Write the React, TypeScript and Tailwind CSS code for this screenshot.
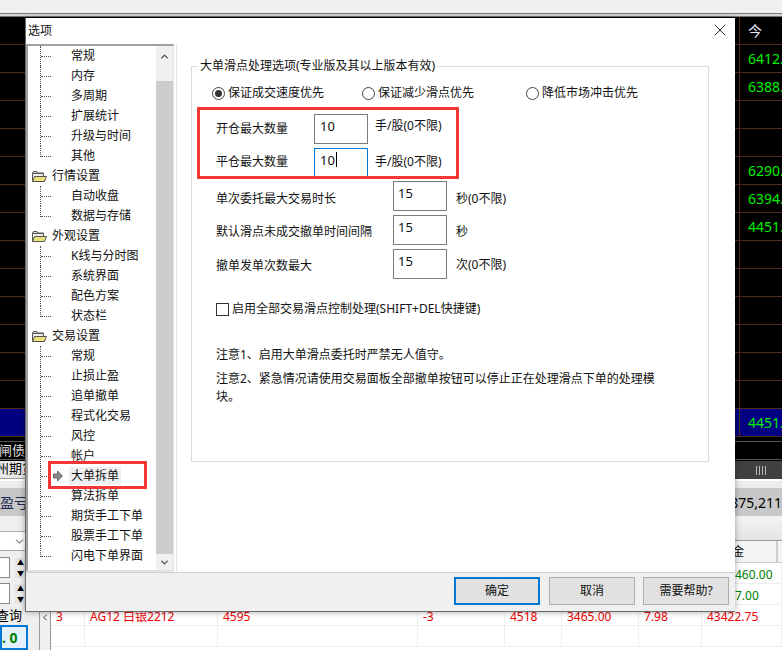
import { ChevronDown, ChevronLeft, X } from "lucide-react";

type TreeItem = { label: string; group?: boolean; last?: boolean; active?: boolean };

const treeItems: TreeItem[] = [
  { label: "常规" },
  { label: "内存" },
  { label: "多周期" },
  { label: "扩展统计" },
  { label: "升级与时间" },
  { label: "其他", last: true },
  { label: "行情设置", group: true },
  { label: "自动收盘" },
  { label: "数据与存储", last: true },
  { label: "外观设置", group: true },
  { label: "K线与分时图" },
  { label: "系统界面" },
  { label: "配色方案" },
  { label: "状态栏", last: true },
  { label: "交易设置", group: true },
  { label: "常规" },
  { label: "止损止盈" },
  { label: "追单撤单" },
  { label: "程式化交易" },
  { label: "风控" },
  { label: "帐户" },
  { label: "大单拆单", active: true },
  { label: "算法拆单" },
  { label: "期货手工下单" },
  { label: "股票手工下单" },
  { label: "闪电下单界面", last: true },
];

const quotes = ["6412.", "6388.", "", "", "6290.", "6394.", "4451.", "", "", "", "", "", "", "4451."];

function FolderIcon() {
  return (
    <svg width="16" height="14" viewBox="0 0 16 14" className="shrink-0">
      <path d="M1.500 4 L2.500 2.500 H6 L7 4 H12.500 V6 H1.500 Z" fill="#d4d4d4" stroke="#555" />
      <path d="M1.500 12.500 V4.500 H12.500 V12.500 Z" fill="#ececec" stroke="#555" />
      <path d="M3.500 7.500 H15.500 L13.500 12.500 H1.500 Z" fill="#ebe27a" stroke="#555" />
    </svg>
  );
}

function TreeRow({ item }: { item: TreeItem }) {
  if (item.group) {
    return (
      <div className="flex h-5 items-center pl-[3px]">
        <FolderIcon />
        <span className="ml-[5px]">{item.label}</span>
      </div>
    );
  }
  return (
    <div className="relative flex h-5 items-center pl-[12px]">
      <div className={`w-0 self-start border-l border-dotted border-[#555] ${item.last ? "h-[11px]" : "h-5"}`} />
      <div className="w-[10px] border-t border-dotted border-[#555]" />
      <div className="w-[20px]">
        {item.active && (
          <svg width="10" height="12" viewBox="0 0 10 12" className="ml-[2px]">
            <path d="M0.500 4 H4.500 V1 L9.500 6 L4.500 11 V8 H0.500 Z" fill="#8a8a8a" stroke="#444" strokeWidth="0.7" />
          </svg>
        )}
      </div>
      <span className={item.active ? "-ml-[2px] bg-[#f0f0f0] px-[2px]" : ""}>{item.label}</span>
      {item.active && (
        <div className="absolute left-[20px] top-0 h-[28px] w-[99px] -translate-y-[5px] border-[3px] border-[#f33535]" />
      )}
    </div>
  );
}

function Radio({ checked, label, className }: { checked?: boolean; label: string; className: string }) {
  return (
    <div className={`flex items-center ${className}`}>
      <span className="flex size-[13px] items-center justify-center rounded-full border border-[#444]">
        {checked && <span className="size-[7px] rounded-full bg-[#333]" />}
      </span>
      <span className="ml-[3px]">{label}</span>
    </div>
  );
}

function NumberField({ label, value, unit, focused, labelClass, unitClass, inputClass, rowClass }: {
  label: string;
  value: string;
  unit: string;
  focused?: boolean;
  labelClass: string;
  unitClass: string;
  inputClass: string;
  rowClass: string;
}) {
  return (
    <div className={`flex ${rowClass}`}>
      <span className={labelClass}>{label}</span>
      <div
        className={`flex items-start pt-[3px] text-[13px] leading-[16px] ${inputClass} border ${focused ? "border-[#0078d7]" : "border-[#7a7a7a]"}`}
      >
        {value}
        {focused && <span className="ml-px h-[15px] w-px bg-black" />}
      </div>
      <span className={unitClass}>{unit}</span>
    </div>
  );
}

function DialogButton({ label, primary }: { label: string; primary?: boolean }) {
  return (
    <button
      className={`h-[28px] w-[86px] bg-[#e1e1e1] ${primary ? "mr-px border-2 border-[#0078d7]" : "border border-[#adadad]"}`}
    >
      {label}
    </button>
  );
}

function OptionsDialog() {
  return (
    <div className="absolute left-[25px] top-[18px] flex h-[594px] w-[710px] flex-col border-b border-l border-[#6a6a6a] bg-white text-[12px] text-[#111] shadow-[0_0_6px_rgba(0,0,0,0.35)]">
      <div className="flex h-[26px] shrink-0 items-center justify-between pl-[2px] pr-[5px]">
        <span className="text-[12px]">选项</span>
        <X size={20} strokeWidth={1} className="-mt-[2px] text-black" />
      </div>
      <div className="flex h-[528px] shrink-0">
        <div className="relative flex h-full w-[148px] shrink-0 border-2 border-r border-[#a0a0a0] border-b-[#e3e3e3] border-r-[#e3e3e3]">
          <div className="w-[128px] shrink-0 overflow-hidden">
            {treeItems.map((item, i) => (
              <TreeRow key={i} item={item} />
            ))}
          </div>
          <div className="flex w-[17px] flex-col bg-[#f0f0f0]">
            <div className="flex h-[35px] items-start justify-center pt-[5px]">
              <ChevronDown size={11} strokeWidth={3} className="rotate-180 text-[#505050]" />
            </div>
            <div className="w-full flex-1 bg-[#cdcdcd]" />
            <div className="flex h-[16px] items-center justify-center">
              <ChevronDown size={11} strokeWidth={3} className="text-[#505050]" />
            </div>
          </div>
        </div>
        <div className="ml-[2px] flex-1 border-l border-[#e3e3e3] pl-[14px] pt-[14px]">
          <fieldset className="h-[404px] w-[518px] border border-[#dcdcdc] pl-[5px]">
            <legend className="ml-[1px] px-[2px] leading-[16px]">大单滑点处理选项(专业版及其以上版本有效)</legend>
            <div className="relative mt-[10px] h-[18px]">
              <Radio checked label="保证成交速度优先" className="absolute left-[15px] top-0" />
              <Radio label="保证减少滑点优先" className="absolute left-[165px] top-0" />
              <Radio label="降低市场冲击优先" className="absolute left-[329px] top-0" />
            </div>
            <div className="mt-[5px] h-[72px] w-[262px] border-[3px] border-[#f33535] pl-[16px] pt-[4px]">
              <NumberField
                label="开仓最大数量"
                value="10"
                unit="手/股(0不限)"
                labelClass="mt-[6px]"
                unitClass="mt-[3px]"
                inputClass="ml-[26px] mr-[7px] h-[30px] w-[54px] pl-[5px]"
                rowClass="h-[34px]"
              />
              <NumberField
                focused
                label="平仓最大数量"
                value="10"
                unit="手/股(0不限)"
                labelClass="mt-[5px]"
                unitClass="mt-[5px]"
                inputClass="ml-[26px] mr-[7px] h-[28px] w-[54px] border-b-0 pl-[5px]"
                rowClass="h-[28px]"
              />
            </div>
            <div className="mt-[2px] pl-[19px]">
              <NumberField
                label="单次委托最大交易时长"
                value="15"
                unit="秒(0不限)"
                labelClass="mt-[9px] w-[177px]"
                unitClass="mt-[9px]"
                inputClass="mr-[9px] h-[30px] w-[54px] pl-[4px]"
                rowClass="h-[34px]"
              />
              <NumberField
                label="默认滑点未成交撤单时间间隔"
                value="15"
                unit="秒"
                labelClass="mt-[8px] w-[177px]"
                unitClass="mt-[8px]"
                inputClass="mr-[9px] h-[30px] w-[54px] pl-[4px]"
                rowClass="h-[34px]"
              />
              <NumberField
                label="撤单发单次数最大"
                value="15"
                unit="次(0不限)"
                labelClass="mt-[8px] w-[177px]"
                unitClass="mt-[7px]"
                inputClass="mr-[9px] h-[30px] w-[54px] pl-[4px]"
                rowClass="h-[34px]"
              />
            </div>
            <div className="mt-[17px] flex items-center pl-[19px]">
              <span className="size-[13px] border border-[#333]" />
              <span className="ml-[3px]">启用全部交易滑点控制处理(SHIFT+DEL快捷键)</span>
            </div>
            <p className="mt-[28px] pl-[19px] leading-[18px]">注意1、启用大单滑点委托时严禁无人值守。</p>
            <p className="mt-[6px] w-[465px] pl-[19px] leading-[18px]">
              注意2、紧急情况请使用交易面板全部撤单按钮可以停止正在处理滑点下单的处理模块。
            </p>
          </fieldset>
        </div>
      </div>
      <div className="flex flex-1 items-center gap-[8px] border-t border-[#d0d0d0] bg-[#f0f0f0] pb-[2px] pl-[428px]">
        <DialogButton label="确定" primary />
        <DialogButton label="取消" />
        <DialogButton label="需要帮助?" />
      </div>
    </div>
  );
}

function QuoteTable() {
  return (
    <div className="h-[420px] overflow-hidden bg-black">
      <div className="flex h-[28px] justify-end border-b border-[#4f2d1f]">
        <div className="h-full w-[43px] border-l border-[#4f2d1f] pl-[8px] text-[14px] leading-[27px] text-[#e8e8ff]">今</div>
      </div>
      {quotes.map((q, i) => (
        <div key={i} className={`flex h-[28px] justify-end border-b border-[#4f2d1f] ${i === 13 ? "bg-[#000080]" : ""}`}>
          <div className="h-full w-[43px] overflow-hidden whitespace-nowrap border-l border-[#4f2d1f] pl-[8px] text-[14px] leading-[27px] text-[#00ee00]">
            {q}
          </div>
        </div>
      ))}
    </div>
  );
}

function PositionRow({ cells, className }: { cells: string[]; className?: string }) {
  const widths = ["w-[34px]", "w-[133px]", "w-[200px]", "w-[87px]", "w-[57px]", "w-[77px]", "w-[63px]", "flex-1"];
  return (
    <div className={`flex h-[21px] border-b border-[#eee] ${className ?? ""}`}>
      {cells.map((c, i) => (
        <div key={i} className={`${widths[i]} border-r border-[#eee] pl-[5px] leading-[23px]`}>
          {c}
        </div>
      ))}
    </div>
  );
}

function SpinBox() {
  return (
    <div className="flex h-[21px] items-stretch">
      <div className="w-[10px] border border-l-0 border-[#888] bg-white" />
      <div className="ml-[5px] flex w-[11px] flex-col justify-center gap-[2px] text-center text-[7px] leading-[9px] text-black">
        <span className="bg-[#e4e4e4]">▲</span>
        <span className="bg-[#e4e4e4]">▼</span>
      </div>
    </div>
  );
}

export default function App() {
  return (
    <div className="relative h-[650px] w-[782px] overflow-hidden bg-white font-['Noto_Sans','Noto_Sans_CJK_SC',sans-serif] text-[12px]">
      <div className="h-[13px] bg-[#f0f0f0]" />
      <div className="h-[4px] border-y border-[#777] bg-[#d8d8d8]" />
      <QuoteTable />
      <div className="h-[24px] bg-black pt-[4px]">
        <div className="flex h-[19px] items-center justify-between border-y border-[#555] text-[13px] text-[#ddd]">
          <span className="-ml-[1px]">闸债</span>
        </div>
      </div>
      <div className="flex h-[18px] items-center justify-between bg-[#404040]">
        <div className="h-full w-[25px] overflow-hidden whitespace-nowrap border-b border-[#999] bg-[#e8e8e8] text-[13px] leading-[14px] text-black">
          <span className="-ml-[4px] inline-block">州期货</span>
        </div>
        <div className="mr-[16px] flex h-[9px] gap-[2px]">
          <span className="w-px bg-[#bbb]" />
          <span className="w-px bg-[#bbb]" />
          <span className="w-px bg-[#bbb]" />
          <span className="w-px bg-[#bbb]" />
        </div>
      </div>
      <div className="h-[9px] border-t-2 border-white bg-[#ececec]" />
      <div className="flex h-[28px] items-center justify-between bg-[#c8c8c8] text-[14px]">
        <span className="text-[#1a2a50]">盈亏</span>
        <span>875,211</span>
      </div>
      <div className="flex h-[134px]">
        <div className="flex w-[39px] shrink-0 flex-col bg-[#efefef]">
          <div className="mt-[15px] flex h-[20px] items-center border-y border-[#aaa] bg-white pl-[13px]">
            <ChevronDown size={13} className="text-[#888]" />
          </div>
          <div className="mt-[6px]">
            <SpinBox />
          </div>
          <div className="mt-[5px]">
            <SpinBox />
          </div>
          <div className="mt-[2px] h-[19px] w-[25px] overflow-hidden whitespace-nowrap text-[13px] leading-[18px] text-black">
            <span className="-ml-[4px] inline-block">查询</span>
          </div>
          <div className="flex h-[25px] w-[28px] items-center border-2 border-[#0078d7] bg-[#e4f0fa] text-[14px] font-bold text-[#008000]">
            <span className="whitespace-pre">. 0</span>
          </div>
        </div>
        <div className="flex flex-1 flex-col">
          <div className="h-[24px] border-l border-[#aaa] bg-gradient-to-b from-[#f4f4f4] to-[#e4e4e4]" />
          <div className="flex flex-1 border-t border-[#9a9a9a]">
            <div className="flex w-[12px] shrink-0 justify-center border-x border-[#999] bg-[#f0f0f0] pt-[67px]">
              <ChevronLeft size={19} strokeWidth={1.8} className="text-black" />
            </div>
            <div className="flex-1">
              <div className="flex h-[22px] border-b border-[#ccc] bg-[#f4f4f4]">
                <div className="w-[651px]" />
                <div className="w-[76px] border-r-2 border-[#ccc] pl-[30px] leading-[21px]">金</div>
              </div>
              <PositionRow
                className="text-[#008000] [&>div:last-child]:pl-[33px]"
                cells={["", "", "", "", "", "", "", "460.00"]}
              />
              <PositionRow
                className="text-[#008000] [&>div:last-child]:pl-[33px]"
                cells={["", "", "", "", "", "", "", "7.00"]}
              />
              <PositionRow
                className="text-[#f00000]"
                cells={["3", "AG12 白银2212", "4595", "-3", "4518", "3465.00", "7.98", "43422.75"]}
              />
              <PositionRow cells={["", "", "", "", "", "", "", ""]} />
            </div>
          </div>
        </div>
      </div>
      <OptionsDialog />
    </div>
  );
}
